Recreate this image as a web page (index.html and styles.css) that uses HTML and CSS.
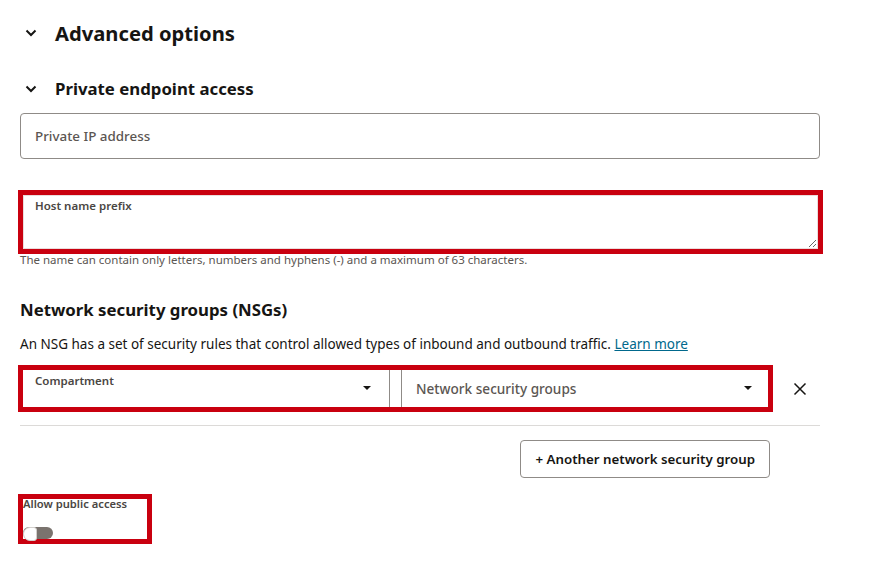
FILE: index.html
```html
<!DOCTYPE html>
<html lang="en">
<head>
    <meta charset="UTF-8">
    <meta name="viewport" content="width=device-width, initial-scale=1.0">
    <title>Advanced options</title>
    <link rel="stylesheet" href="styles.css">
</head>
<body>

    <div class="panel">
        <!-- Section header -->
        <div class="section-title">
            <svg class="chevron" width="12" height="8" viewBox="0 0 12 8"><path d="M1.5 1.5 L6 6 L10.5 1.5" fill="none" stroke="#161513" stroke-width="2"/></svg>
            <h2>Advanced options</h2>
        </div>

        <div class="sub-title">
            <svg class="chevron" width="12" height="8" viewBox="0 0 12 8"><path d="M1.5 1.5 L6 6 L10.5 1.5" fill="none" stroke="#161513" stroke-width="2"/></svg>
            <h3>Private endpoint access</h3>
        </div>

        <div class="field">
            <span class="placeholder">Private IP address</span>
        </div>

        <!-- Host name prefix -->
        <div class="highlight host-box">
            <label for="host-prefix" class="inner-label">Host name prefix</label>
            <textarea id="host-prefix"></textarea>
        </div>
        <p class="help">The name can contain only letters, numbers and hyphens (-) and a maximum of 63 characters.</p>

        <!-- Network security groups -->
        <h4>Network security groups (NSGs)</h4>
        <p class="desc">An NSG has a set of security rules that control allowed types of inbound and outbound traffic. <a href="#">Learn more</a></p>

        <div class="nsg-row">
            <div class="highlight selects">
                <div class="select compartment">
                    <span class="inner-label">Compartment</span>
                    <span class="caret"></span>
                </div>
                <div class="select groups">
                    <span class="placeholder groups-text">Network security groups</span>
                    <span class="caret"></span>
                </div>
            </div>
            <svg class="remove" width="14" height="14" viewBox="0 0 14 14"><path d="M1.5 1.5 L12.5 12.5 M12.5 1.5 L1.5 12.5" stroke="#161513" stroke-width="1.5"/></svg>
        </div>

        <div class="divider"></div>

        <div class="actions">
            <button class="secondary">+ Another network security group</button>
        </div>

        <!-- Public access toggle -->
        <div class="highlight toggle-box">
            <span class="toggle-label">Allow public access</span>
            <span class="switch"><span class="knob"></span></span>
        </div>
    </div>

</body>
</html>
```

FILE: styles.css
```css
/* General Styles */
* {
    margin: 0;
    padding: 0;
    box-sizing: border-box;
}

body {
    font-family: 'Noto Sans', 'Open Sans', sans-serif;
    background-color: #fff;
    color: #161513;
}

.panel {
    width: 820px;
    padding: 20px 0 0 20px;
}

.section-title,
.sub-title {
    display: flex;
    align-items: center;
}

.chevron {
    margin: 0 18px 0 5px;
}

h2 {
    font-size: 20.2px;
    font-weight: 700;
    line-height: 26px;
}

.sub-title {
    margin-top: 32px;
}

h3 {
    font-size: 16.8px;
    font-weight: 700;
    line-height: 22px;
}

.field {
    margin-top: 13px;
    height: 46px;
    border: 1px solid #8f8b87;
    border-radius: 4px;
    display: flex;
    align-items: center;
    padding-left: 14px;
}

.placeholder {
    font-size: 13.4px;
    font-weight: 500;
    color: #5b5652;
}

.highlight {
    border: 5px solid #c9000f;
}

.host-box {
    margin: 31px 0 0 -2px;
    width: 805px;
    height: 64px;
    display: flex;
    flex-direction: column;
    padding: 3px 0 0 12px;
    position: relative;
}

.inner-label {
    font-size: 11.5px;
    font-weight: 600;
    color: #4a4643;
    line-height: 15px;
}

.host-box textarea {
    position: absolute;
    inset: 0;
    border: 1px solid #eadcdc;
    background: transparent;
    resize: vertical;
    outline: none;
}

.help {
    font-size: 11.5px;
    color: #5b5652;
    margin-top: -1px;
    line-height: 13px;
}

h4 {
    font-size: 16.8px;
    font-weight: 700;
    margin-top: 33px;
    line-height: 22px;
}

.desc {
    font-size: 13.5px;
    margin-top: 13px;
    line-height: 20px;
}

.desc a {
    color: #00688c;
    text-decoration: underline;
}

.nsg-row {
    display: flex;
    align-items: center;
    margin-top: 11px;
}

.selects {
    margin-left: -2px;
    width: 755px;
    height: 47px;
    flex-shrink: 0;
    display: flex;
    gap: 11px;
}

.select {
    position: relative;
    display: flex;
    height: 100%;
}

.compartment {
    width: 367px;
    border-right: 1px solid #8f8b87;
    padding: 3px 0 0 12px;
}

.groups {
    flex: 1;
    border-left: 1px solid #8f8b87;
    align-items: center;
    padding-left: 14px;
}

.groups-text {
    font-size: 13.6px;
}

.caret {
    position: absolute;
    top: 16px;
    border-left: 4px solid transparent;
    border-right: 4px solid transparent;
    border-top: 4px solid #161513;
}

.compartment .caret {
    right: 18px;
}

.groups .caret {
    right: 16px;
}

.remove {
    margin-left: 20px;
}

.divider {
    height: 1px;
    background: #dcdad8;
    margin-top: 13px;
}

.actions {
    display: flex;
    justify-content: flex-end;
    padding-right: 50px;
    margin-top: 14px;
}

.secondary {
    height: 38px;
    padding: 0 14px;
    border: 1px solid #8f8b87;
    border-radius: 4px;
    background: #fff;
    font-family: inherit;
    font-size: 13.3px;
    font-weight: 600;
    color: #161513;
}

.toggle-box {
    margin: 16px 0 0 -2px;
    width: 134px;
    height: 50px;
    display: flex;
    flex-direction: column;
}

.toggle-label {
    font-size: 11.2px;
    font-weight: 600;
    color: #4a4643;
    line-height: 12px;
    margin-top: -1px;
}

.switch {
    margin-top: 17px;
    width: 30px;
    height: 14px;
    background: #7a736e;
    border-radius: 7px;
    position: relative;
}

.knob {
    position: absolute;
    left: 0;
    top: 0;
    width: 14px;
    height: 14px;
    border-radius: 7px 3px 3px 7px;
    background: #fff;
    border: 1px solid #d3d0cd;
}
```
